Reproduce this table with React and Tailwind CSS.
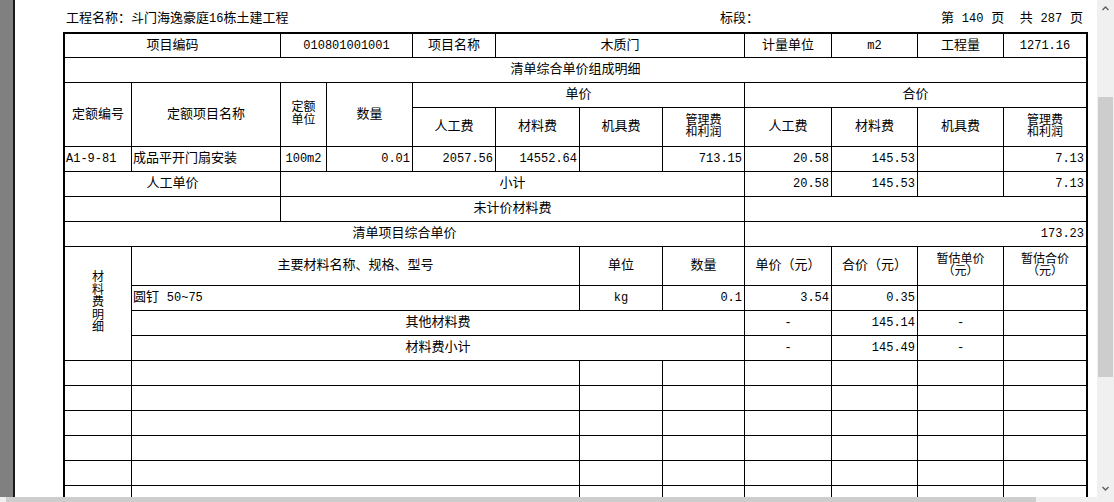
const FONT = "font-['Liberation_Mono','Noto_Sans_CJK_SC',monospace]"

const c = 'bg-white flex items-center justify-center text-center'
const n = 'bg-white flex items-center justify-end pr-[2px] text-[12px]'
const l = 'bg-white flex items-center justify-start pl-[1px]'
const two = 'bg-white flex flex-col items-center justify-center text-[12px] leading-[12.5px]'

function ChevronUp() {
  return (
    <svg width="7" height="5" viewBox="0 0 7 5" className="text-[#606060]">
      <path d="M0.5 4 L3.5 1 L6.5 4" fill="none" stroke="currentColor" strokeWidth="1.4" />
    </svg>
  )
}

function ChevronDown() {
  return (
    <svg width="7" height="5" viewBox="0 0 7 5" className="text-[#606060]">
      <path d="M0.5 1 L3.5 4 L6.5 1" fill="none" stroke="currentColor" strokeWidth="1.4" />
    </svg>
  )
}

function EmptyRow() {
  return (
    <>
      <div className={c} />
      <div className={`${c} col-span-5`} />
      <div className={c} />
      <div className={c} />
      <div className={c} />
      <div className={c} />
      <div className={c} />
      <div className={c} />
    </>
  )
}

function PriceTable() {
  return (
    <div className="grid gap-px bg-black border-2 border-black w-[1025px] grid-cols-[66px_148px_45px_85px_82px_83px_82px_81px_86px_85px_85px_82px] grid-rows-[23px_24px_24px_38px_24px_24px_24px_24px_38px_repeat(9,24px)]">
      {/* 项目信息 */}
      <div className={`${c} col-span-2`}>项目编码</div>
      <div className={`${c} col-span-2 text-[12px]`}>010801001001</div>
      <div className={c}>项目名称</div>
      <div className={`${c} col-span-3`}>木质门</div>
      <div className={c}>计量单位</div>
      <div className={`${c} text-[12px]`}>m2</div>
      <div className={c}>工程量</div>
      <div className={`${c} text-[12px]`}>1271.16</div>

      <div className={`${c} col-span-12`}>清单综合单价组成明细</div>

      {/* 表头 */}
      <div className={`${c} row-span-2`}>定额编号</div>
      <div className={`${c} row-span-2`}>定额项目名称</div>
      <div className={`${two} row-span-2`}>
        <span>定额</span>
        <span>单位</span>
      </div>
      <div className={`${c} row-span-2`}>数量</div>
      <div className={`${c} col-span-4`}>单价</div>
      <div className={`${c} col-span-4`}>合价</div>
      <div className={c}>人工费</div>
      <div className={c}>材料费</div>
      <div className={c}>机具费</div>
      <div className={two}>
        <span>管理费</span>
        <span>和利润</span>
      </div>
      <div className={c}>人工费</div>
      <div className={c}>材料费</div>
      <div className={c}>机具费</div>
      <div className={two}>
        <span>管理费</span>
        <span>和利润</span>
      </div>

      {/* 定额行 */}
      <div className={`${l} text-[12px]`}>A1-9-81</div>
      <div className={l}>成品平开门扇安装</div>
      <div className={`${c} text-[12px]`}>100m2</div>
      <div className={n}>0.01</div>
      <div className={n}>2057.56</div>
      <div className={n}>14552.64</div>
      <div className={n} />
      <div className={n}>713.15</div>
      <div className={n}>20.58</div>
      <div className={n}>145.53</div>
      <div className={n} />
      <div className={n}>7.13</div>

      <div className={`${c} col-span-2`}>人工单价</div>
      <div className={`${c} col-span-6`}>小计</div>
      <div className={n}>20.58</div>
      <div className={n}>145.53</div>
      <div className={n} />
      <div className={n}>7.13</div>

      <div className={`${c} col-span-2`} />
      <div className={`${c} col-span-6`}>未计价材料费</div>
      <div className={`${c} col-span-4`} />

      <div className={`${c} col-span-8`}>清单项目综合单价</div>
      <div className={`${n} col-span-4`}>173.23</div>

      {/* 材料费明细 */}
      <div className="bg-white row-span-4 flex flex-col items-center justify-center text-[12px] leading-[12.6px]">
        <span>材</span>
        <span>料</span>
        <span>费</span>
        <span>明</span>
        <span>细</span>
      </div>
      <div className={`${c} col-span-5`}>主要材料名称、规格、型号</div>
      <div className={c}>单位</div>
      <div className={c}>数量</div>
      <div className={c}>单价（元）</div>
      <div className={c}>合价（元）</div>
      <div className={two}>
        <span>暂估单价</span>
        <span>（元）</span>
      </div>
      <div className={two}>
        <span>暂估合价</span>
        <span>（元）</span>
      </div>

      <div className={`${l} col-span-5 whitespace-pre`}>
        圆钉 <span className="text-[12px]">50~75</span>
      </div>
      <div className={`${c} text-[12px]`}>kg</div>
      <div className={n}>0.1</div>
      <div className={n}>3.54</div>
      <div className={n}>0.35</div>
      <div className={n} />
      <div className={n} />

      <div className={`${c} col-span-7`}>其他材料费</div>
      <div className={`${c} text-[12px]`}>-</div>
      <div className={n}>145.14</div>
      <div className={`${c} text-[12px]`}>-</div>
      <div className={c} />

      <div className={`${c} col-span-7`}>材料费小计</div>
      <div className={`${c} text-[12px]`}>-</div>
      <div className={n}>145.49</div>
      <div className={`${c} text-[12px]`}>-</div>
      <div className={c} />

      <EmptyRow />
      <EmptyRow />
      <EmptyRow />
      <EmptyRow />
      <EmptyRow />
      <EmptyRow />
    </div>
  )
}

export default function App() {
  return (
    <div className={`w-[1114px] h-[502px] overflow-hidden flex flex-col bg-white text-black text-[13px] ${FONT}`}>
      <div className="flex h-[497px] shrink-0">
        <div className="w-[15px] shrink-0 bg-[#808080] border-r-2 border-[#1a1a1a]" />

        <div className="flex-1 overflow-hidden bg-white pl-[48px]">
          <div className="flex items-end h-[32px] pb-[5px] leading-[16px]">
            <div className="w-[657px] pl-[3px] shrink-0">
              工程名称：斗门海逸豪庭<span className="text-[12px]">16</span>栋土建工程
            </div>
            <div>标段：</div>
            <div className="ml-auto whitespace-pre text-right">
              第 <span className="text-[12px]">140</span> 页  共 <span className="text-[12px]">287</span> 页
            </div>
            <div className="w-[14px] shrink-0" />
          </div>
          <PriceTable />
        </div>

        <div className="w-[17px] shrink-0 bg-[#f0f0f0] flex flex-col items-center">
          <div className="h-[17px] flex items-center justify-center">
            <ChevronUp />
          </div>
          <div className="h-[80px]" />
          <div className="w-[15px] h-[280px] bg-[#cdcdcd]" />
          <div className="flex-1" />
          <div className="h-[17px] flex items-center justify-center">
            <ChevronDown />
          </div>
        </div>
      </div>

      <div className="h-[17px] shrink-0 bg-[#f0f0f0] flex">
        <div className="ml-[6px] w-[1030px] h-full bg-[#cdcdcd]" />
      </div>
    </div>
  )
}
